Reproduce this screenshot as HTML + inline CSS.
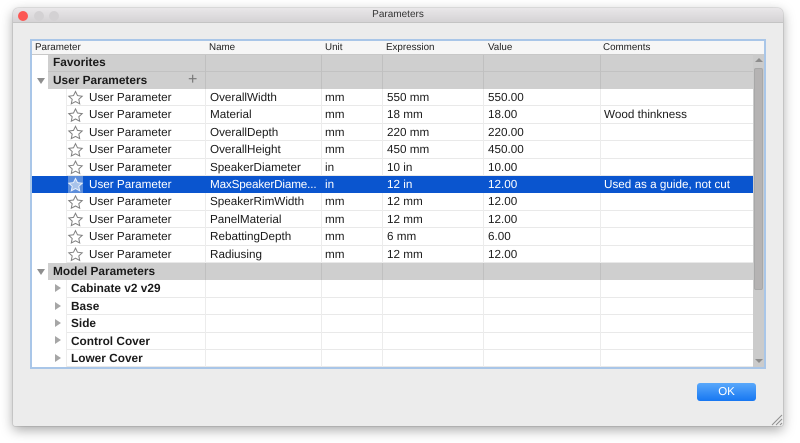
<!DOCTYPE html>
<html><head><meta charset="utf-8"><style>
html,body{margin:0;padding:0;width:800px;height:443px;overflow:hidden;background:#fff}
body{position:relative;font-family:"Liberation Sans",sans-serif;color:#1a1a1a;text-rendering:geometricPrecision}
#win{position:absolute;left:13px;top:8px;width:770px;height:418px;background:#ececec;border-radius:5px 5px 2px 2px;box-shadow:0 4px 12px rgba(0,0,0,.35),0 0 1px rgba(0,0,0,.5)}
#tb{position:absolute;left:0;top:0;width:770px;height:14px;background:linear-gradient(#e9e7e9,#d5d3d5);border-radius:5px 5px 0 0;border-bottom:1px solid #c4c4c4;text-align:center;font-size:10px;line-height:14px;color:#333}
.dot{position:absolute;top:9px;width:10px;height:10px;border-radius:50%}
#box{position:absolute;left:30px;top:39px;width:732px;height:326px;border:2px solid #a9c6e8;background:#fff;overflow:hidden}
.r{position:absolute;left:0;width:732px;height:17px;font-size:11.7px;line-height:17px;white-space:nowrap}
.r span{position:absolute;top:0}
.row{border-bottom:1px solid #e9e9e9;height:16.4px}
.g{background:#cfcfcf;left:16px;width:705px;font-weight:bold;border-bottom:1px solid #c2c2c2;box-sizing:border-box;height:18px;z-index:1}
.m{font-weight:bold;font-size:11.85px}
.sel{background:#0a55cf;color:#fff;border:0;height:17.4px}
.hd{position:absolute;left:0;top:0;width:732px;height:13px;background:#f6f6f6;border-bottom:1px solid #c8c8c8;font-size:9.8px;line-height:13px;color:#222;z-index:3}
.hd span{position:absolute;top:0}
.v{position:absolute;top:0;width:1px;height:326px;background:#ececec;z-index:2}
.vg{position:absolute;width:1px;background:#c0c0c0;z-index:2}
svg{position:absolute}
#sb{position:absolute;left:721px;top:13px;width:11px;height:313px;background:#cbcbcb;z-index:4}
#th{position:absolute;left:1px;top:14px;width:9px;height:222px;background:#b5b3b3;border-radius:2px;border:1px solid #a8a8a8;box-sizing:border-box}
.tri{position:absolute;width:0;height:0;z-index:3}
#ok{position:absolute;left:697px;top:383px;width:59px;height:18px;border-radius:3px;background:linear-gradient(#5aa8fb,#1677f2);color:#fff;font-size:11.5px;line-height:18px;text-align:center}
</style></head><body>
<div id="win"><div id="tb">Parameters</div>
<div class="dot" style="left:5px;top:3px;background:#fc5753"></div>
<div class="dot" style="left:21px;top:3px;background:#d3d1d3"></div>
<div class="dot" style="left:36px;top:3px;background:#d3d1d3"></div>
</div>
<div id="box">
<div class="hd"><span style="left:3px">Parameter</span><span style="left:177px">Name</span><span style="left:293px">Unit</span><span style="left:354px">Expression</span><span style="left:456px">Value</span><span style="left:571px">Comments</span></div>
<div class="v" style="left:173px"></div><div class="v" style="left:289px"></div><div class="v" style="left:350px"></div><div class="v" style="left:451px"></div><div class="v" style="left:568px"></div>
<div class="v" style="left:34px;top:48px;height:174px"></div>
<div class="v" style="left:34px;top:239px;height:87px"></div>
<div class="vg" style="left:173px;top:13px;height:35px"></div><div class="vg" style="left:289px;top:13px;height:35px"></div><div class="vg" style="left:350px;top:13px;height:35px"></div><div class="vg" style="left:451px;top:13px;height:35px"></div><div class="vg" style="left:568px;top:13px;height:35px"></div>
<div class="vg" style="left:173px;top:222px;height:17px"></div><div class="vg" style="left:289px;top:222px;height:17px"></div><div class="vg" style="left:350px;top:222px;height:17px"></div><div class="vg" style="left:451px;top:222px;height:17px"></div><div class="vg" style="left:568px;top:222px;height:17px"></div>

<div class="r g m" style="top:13px"><span style="left:5px">Favorites</span></div>
<div class="r g m" style="top:31px;height:17px;border-bottom:0"><span style="left:5px">User Parameters</span><span style="left:140px;top:-1px;font-weight:normal;font-size:16px;color:#777">+</span></div>
<div class="tri" style="left:5px;top:37px;border-left:4px solid transparent;border-right:4px solid transparent;border-top:6px solid #8e8e8e"></div>

<div class="r row" style="top:48px;left:34px;width:687px"><span style="left:23px">User Parameter</span><span style="left:144px">OverallWidth</span><span style="left:259px">mm</span><span style="left:321px">550 mm</span><span style="left:422px">550.00</span></div>
<div class="r row" style="top:65.4px;left:34px;width:687px"><span style="left:23px">User Parameter</span><span style="left:144px">Material</span><span style="left:259px">mm</span><span style="left:321px">18 mm</span><span style="left:422px">18.00</span><span style="left:538px">Wood thinkness</span></div>
<div class="r row" style="top:82.8px;left:34px;width:687px"><span style="left:23px">User Parameter</span><span style="left:144px">OverallDepth</span><span style="left:259px">mm</span><span style="left:321px">220 mm</span><span style="left:422px">220.00</span></div>
<div class="r row" style="top:100.2px;left:34px;width:687px"><span style="left:23px">User Parameter</span><span style="left:144px">OverallHeight</span><span style="left:259px">mm</span><span style="left:321px">450 mm</span><span style="left:422px">450.00</span></div>
<div class="r row" style="top:117.6px;left:34px;width:687px"><span style="left:23px">User Parameter</span><span style="left:144px">SpeakerDiameter</span><span style="left:259px">in</span><span style="left:321px">10 in</span><span style="left:422px">10.00</span></div>
<div class="r sel" style="top:135px;left:0;width:721px;z-index:3"><span style="left:57px">User Parameter</span><span style="left:178px;letter-spacing:-.15px">MaxSpeakerDiame...</span><span style="left:293px">in</span><span style="left:355px">12 in</span><span style="left:456px">12.00</span><span style="left:572px">Used as a guide, not cut</span></div>
<div class="r row" style="top:152.4px;left:34px;width:687px"><span style="left:23px">User Parameter</span><span style="left:144px">SpeakerRimWidth</span><span style="left:259px">mm</span><span style="left:321px">12 mm</span><span style="left:422px">12.00</span></div>
<div class="r row" style="top:169.8px;left:34px;width:687px"><span style="left:23px">User Parameter</span><span style="left:144px">PanelMaterial</span><span style="left:259px">mm</span><span style="left:321px">12 mm</span><span style="left:422px">12.00</span></div>
<div class="r row" style="top:187.2px;left:34px;width:687px"><span style="left:23px">User Parameter</span><span style="left:144px">RebattingDepth</span><span style="left:259px">mm</span><span style="left:321px">6 mm</span><span style="left:422px">6.00</span></div>
<div class="r row" style="top:204.6px;left:34px;width:687px"><span style="left:23px">User Parameter</span><span style="left:144px">Radiusing</span><span style="left:259px">mm</span><span style="left:321px">12 mm</span><span style="left:422px">12.00</span></div>

<svg style="left:33px;top:48px;z-index:5" width="24" height="180" viewBox="0 0 24 180" fill="none" stroke="#808080" stroke-width="1">
<path d="M10.5 2.5 L12.5 6.6 L17.2 7.2 L13.8 10.3 L14.7 14.8 L10.5 12.6 L6.3 14.8 L7.2 10.3 L3.8 7.2 L8.5 6.6Z"/>
<path transform="translate(0,17.4)" d="M10.5 2.5 L12.5 6.6 L17.2 7.2 L13.8 10.3 L14.7 14.8 L10.5 12.6 L6.3 14.8 L7.2 10.3 L3.8 7.2 L8.5 6.6Z"/>
<path transform="translate(0,34.8)" d="M10.5 2.5 L12.5 6.6 L17.2 7.2 L13.8 10.3 L14.7 14.8 L10.5 12.6 L6.3 14.8 L7.2 10.3 L3.8 7.2 L8.5 6.6Z"/>
<path transform="translate(0,52.2)" d="M10.5 2.5 L12.5 6.6 L17.2 7.2 L13.8 10.3 L14.7 14.8 L10.5 12.6 L6.3 14.8 L7.2 10.3 L3.8 7.2 L8.5 6.6Z"/>
<path transform="translate(0,69.6)" d="M10.5 2.5 L12.5 6.6 L17.2 7.2 L13.8 10.3 L14.7 14.8 L10.5 12.6 L6.3 14.8 L7.2 10.3 L3.8 7.2 L8.5 6.6Z"/>
<rect x="3" y="87" width="15" height="17" fill="#5d8edb" stroke="none"/>
<path transform="translate(0,87)" fill="#a9c3ea" stroke="#eaf0fa" d="M10.5 2.5 L12.5 6.6 L17.2 7.2 L13.8 10.3 L14.7 14.8 L10.5 12.6 L6.3 14.8 L7.2 10.3 L3.8 7.2 L8.5 6.6Z"/>
<path transform="translate(0,104.4)" d="M10.5 2.5 L12.5 6.6 L17.2 7.2 L13.8 10.3 L14.7 14.8 L10.5 12.6 L6.3 14.8 L7.2 10.3 L3.8 7.2 L8.5 6.6Z"/>
<path transform="translate(0,121.8)" d="M10.5 2.5 L12.5 6.6 L17.2 7.2 L13.8 10.3 L14.7 14.8 L10.5 12.6 L6.3 14.8 L7.2 10.3 L3.8 7.2 L8.5 6.6Z"/>
<path transform="translate(0,139.2)" d="M10.5 2.5 L12.5 6.6 L17.2 7.2 L13.8 10.3 L14.7 14.8 L10.5 12.6 L6.3 14.8 L7.2 10.3 L3.8 7.2 L8.5 6.6Z"/>
<path transform="translate(0,156.6)" d="M10.5 2.5 L12.5 6.6 L17.2 7.2 L13.8 10.3 L14.7 14.8 L10.5 12.6 L6.3 14.8 L7.2 10.3 L3.8 7.2 L8.5 6.6Z"/>
</svg>

<div class="r g m" style="top:222px;height:17px;border-bottom:0"><span style="left:5px">Model Parameters</span></div>
<div class="tri" style="left:5px;top:228px;border-left:4px solid transparent;border-right:4px solid transparent;border-top:6px solid #8e8e8e"></div>

<div class="r row m" style="top:239.4px;left:34px;width:687px"><span style="left:5px">Cabinate v2 v29</span></div>
<div class="r row m" style="top:256.8px;left:34px;width:687px"><span style="left:5px">Base</span></div>
<div class="r row m" style="top:274.2px;left:34px;width:687px"><span style="left:5px">Side</span></div>
<div class="r row m" style="top:291.6px;left:34px;width:687px"><span style="left:5px">Control Cover</span></div>
<div class="r row m" style="top:309px;left:34px;width:687px"><span style="left:5px">Lower Cover</span></div>
<div class="tri" style="left:23px;top:243px;border-top:4px solid transparent;border-bottom:4px solid transparent;border-left:6px solid #a6a6a6"></div>
<div class="tri" style="left:23px;top:261px;border-top:4px solid transparent;border-bottom:4px solid transparent;border-left:6px solid #a6a6a6"></div>
<div class="tri" style="left:23px;top:278px;border-top:4px solid transparent;border-bottom:4px solid transparent;border-left:6px solid #a6a6a6"></div>
<div class="tri" style="left:23px;top:295px;border-top:4px solid transparent;border-bottom:4px solid transparent;border-left:6px solid #a6a6a6"></div>
<div class="tri" style="left:23px;top:313px;border-top:4px solid transparent;border-bottom:4px solid transparent;border-left:6px solid #a6a6a6"></div>

<div id="sb">
<div class="tri" style="left:2px;top:4px;border-left:4px solid transparent;border-right:4px solid transparent;border-bottom:4px solid #8d8d8d"></div>
<div id="th"></div>
<div class="tri" style="left:2px;top:305px;border-left:4px solid transparent;border-right:4px solid transparent;border-top:4px solid #8d8d8d"></div>
</div>
</div>
<div id="ok">OK</div>
<svg style="left:771px;top:414px" width="12" height="12" stroke="#8e8e8e" stroke-width="1"><path d="M1 11 L11 1 M5 11 L11 5 M9 11 L11 9"/></svg>
</body></html>
